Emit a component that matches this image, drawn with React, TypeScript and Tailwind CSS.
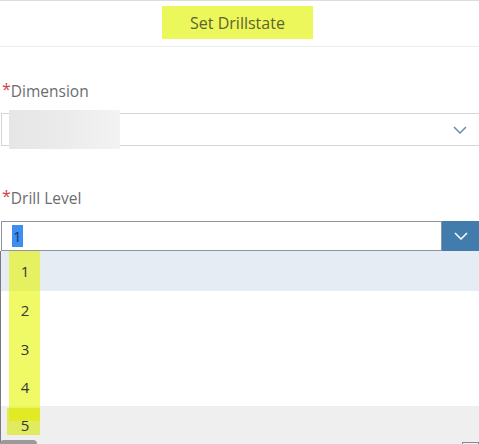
import React from "react";

const Chevron = ({ color, className }: { color: string; className?: string }) => (
  <svg width="14" height="8" viewBox="0 0 14 8" className={className}>
    <path d="M1 1 L7 7 L13 1" fill="none" stroke={color} strokeWidth="1.5" />
  </svg>
);

export default function App() {
  const rows = [
    { n: "1", h: "h-[40px]", bg: "bg-[#e5ecf3]" },
    { n: "2", h: "h-[39px]", bg: "bg-white" },
    { n: "3", h: "h-[38px]", bg: "bg-white" },
    { n: "4", h: "h-[38px]", bg: "bg-white" },
    { n: "5", h: "h-[38px]", bg: "bg-[#efefef]" },
  ];
  return (
    <div
      className="relative w-[479px] h-[444px] bg-white overflow-hidden text-[#32363a]"
      style={{ fontFamily: '"Open Sans", "Liberation Sans", sans-serif' }}
    >
      {/* header */}
      <div className="h-[47px] border-t border-b border-t-[#dcdcdc] border-b-[#ececec] flex items-start justify-center pt-[5px]">
        <div className="ml-[-4px] w-[151px] h-[33px] bg-[#ebf75a] flex items-center justify-center text-[16px] text-[#5f6330]">
          Set Drillstate
        </div>
      </div>

      {/* Dimension */}
      <div className="mt-[35px] pl-[2px] flex items-start text-[15.5px] leading-[19px] text-[#6a6d70]">
        <span className="text-[#d04343] text-[16px] leading-[14px]">*</span>
        <span>Dimension</span>
      </div>
      <div className="relative mt-[12px] ml-[1px] h-[33px] border border-[#d5d5d5] border-r-0 flex items-center justify-end pr-[12px]">
        <Chevron color="#6a8bb0" />
        <div className="absolute left-[7px] top-[-4px] w-[111px] h-[39px] bg-gradient-to-r from-[#e6e6e6] via-[#ebebeb] to-[#f3f3f3]" />
      </div>

      {/* Drill Level */}
      <div className="mt-[43px] pl-[2px] flex items-start text-[15.5px] leading-[19px] text-[#6a6d70]">
        <span className="text-[#d04343] text-[16px] leading-[14px]">*</span>
        <span>Drill Level</span>
      </div>
      <div className="mt-[13px] ml-[1px] h-[30px] flex">
        <div className="flex-1 border border-[#8c96a0] flex items-center pl-[10px]">
          <span className="bg-[#3d8ef0] text-[#13386b] text-[15px] leading-[22px] px-[1px]">1</span>
        </div>
        <div className="w-[37px] bg-[#427cac] flex items-center justify-center">
          <Chevron color="#ffffff" />
        </div>
      </div>

      {/* list */}
      <div className="relative border-l border-l-[#7a7a7a]">
        {rows.map((r) => (
          <div key={r.n} className={`${r.h} ${r.bg} flex items-center`}>
            <span className="w-[48px] text-center text-[15px] text-[#32363a] relative z-10">{r.n}</span>
          </div>
        ))}
        <div className="absolute left-[8px] top-0 w-[31px] h-[170px] bg-[#e6f500]/60" />
        <div className="absolute left-[6px] top-[157px] w-[33px] h-[27px] bg-[#d8e600]/60" />
      </div>

      {/* bottom scraps */}
      <div className="absolute left-0 bottom-[-4px] w-[37px] h-[8px] rounded-[4px] bg-[#9a9a9a]" />
      <div className="absolute right-0 bottom-[-2px] w-[17px] h-[4px] border border-[#888] bg-[#f5f5f5]" />
    </div>
  );
}
